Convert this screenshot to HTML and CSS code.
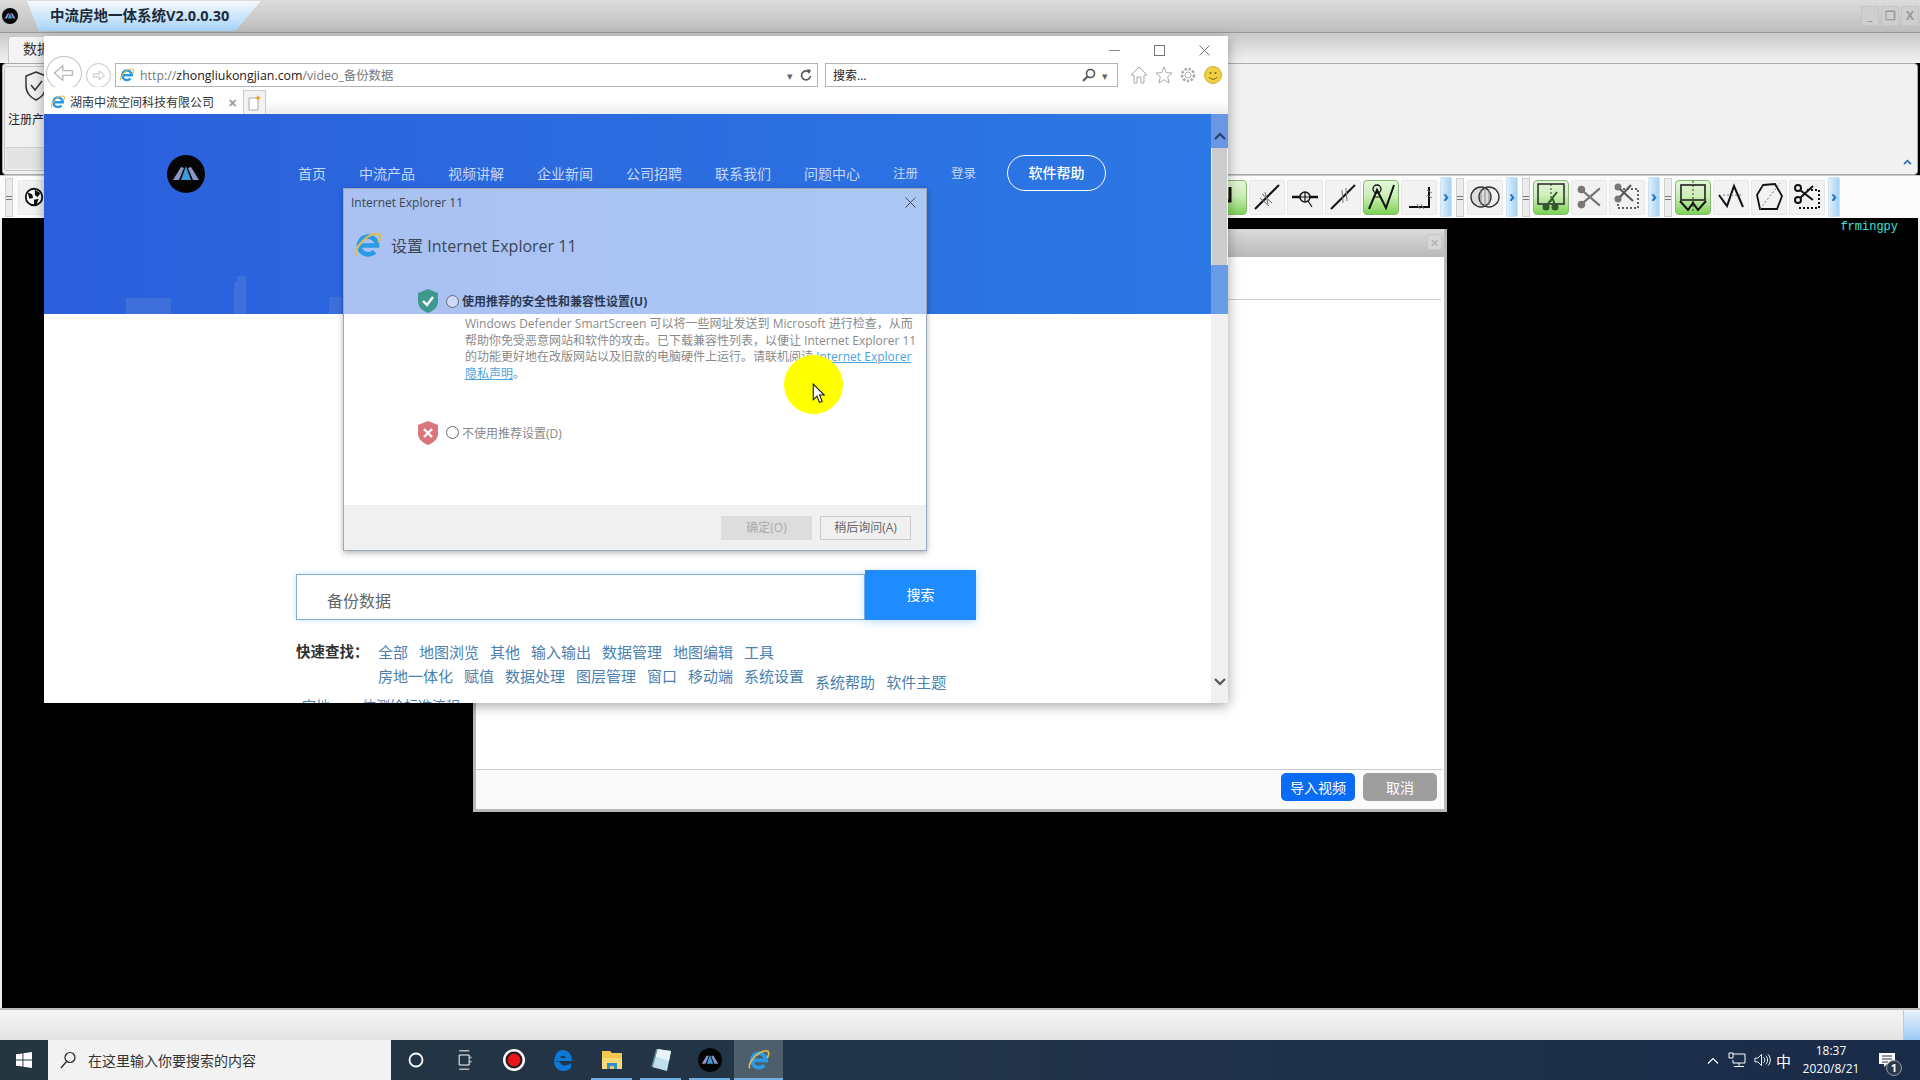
FILE: index.html
```html
<!DOCTYPE html>
<html lang="zh-CN">
<head>
  <meta charset="UTF-8">
  <title>中流房地一体系统</title>
  <link rel="stylesheet" href="styles.css">
</head>
<body>
  <svg class="defs" xmlns="http://www.w3.org/2000/svg">
    <symbol id="ie" viewBox="0 0 32 32">
      <path d="M6.5 16.5H25.5A9.5 9.5 0 1 0 23 23" fill="none" stroke="#2a9be8" stroke-width="5"/>
      <path d="M4 27C0 22 12 6 24 4c6-1 6 4 3 9" fill="none" stroke="#e3bd4c" stroke-width="2.2"/>
    </symbol>
    <symbol id="zl-logo" viewBox="0 0 38 38">
      <ellipse cx="19" cy="19" rx="19" ry="19" fill="#050505"/>
      <path d="M6 25L14 12l3 1-5 12z" fill="#8d97c9"/>
      <path d="M32 25L24 12l-3 1 5 12z" fill="#8d97c9"/>
      <path d="M14 25l5-14 5 14z" fill="#3f9ad8"/>
    </symbol>
    <symbol id="scissors" viewBox="0 0 24 24">
      <circle cx="5" cy="5" r="3.5" fill="currentColor"/>
      <circle cx="5" cy="19" r="3.5" fill="currentColor"/>
      <path d="M7 7l15 13M7 17L22 4" fill="none" stroke="currentColor" stroke-width="2"/>
    </symbol>
  </svg>

  <div class="app-title">
    <svg class="app-logo"><use href="#zl-logo"/></svg>
    <div class="app-title-tab">中流房地一体系统V2.0.0.30</div>
    <div class="app-controls">
      <span class="app-control">_</span>
      <span class="app-control">&#10064;</span>
      <span class="app-control">X</span>
    </div>
  </div>

  <div class="app-tabs">
    <div class="app-tab">数据</div>
  </div>

  <div class="ribbon">
    <div class="ribbon-group">
      <svg class="ribbon-shield" viewBox="0 0 24 32">
        <path d="M12 2L22 6V16C22 23 17 28 12 30C7 28 2 23 2 16V6Z" fill="none" stroke="#333" stroke-width="1.5"/>
        <path d="M7 15l4 5 7-9" fill="none" stroke="#333" stroke-width="1.5"/>
      </svg>
      <div class="ribbon-label">注册产品</div>
      <div class="ribbon-strip"></div>
    </div>
    <svg class="ribbon-collapse" viewBox="0 0 10 8"><path d="M1 7l4-4 4 4" fill="none" stroke="#2a70b8" stroke-width="2"/></svg>
  </div>

  <div class="toolbar">
    <span class="grip first-grip"></span>
    <div class="tool">
      <svg viewBox="0 0 24 24">
        <circle cx="12" cy="12" r="9" fill="#fff" stroke="#111" stroke-width="2"/>
        <path d="M5 7l5 2 1 4-4 1zM13 4l6 4-3 4-3-2zM12 15l5-1-2 6-3 1z" fill="#111"/>
      </svg>
    </div>
    <div class="tools-right">
      <div class="tool green">
        <svg viewBox="0 0 36 34"><path d="M19 7V21H13" fill="none" stroke="#111" stroke-width="3"/></svg>
      </div>
      <div class="tool">
        <svg viewBox="0 0 36 34">
          <path d="M6 29L30 5" stroke="#111" stroke-width="2"/>
          <path d="M13 14l10 9M11 18l9 8M16 12l3 12" stroke="#666" stroke-width="1"/>
        </svg>
      </div>
      <div class="tool">
        <svg viewBox="0 0 36 34">
          <path d="M5 17H31" stroke="#111" stroke-width="2.5"/>
          <circle cx="18" cy="17" r="5" fill="#eee" stroke="#111" stroke-width="1.5"/>
          <path d="M18 12v10M13 17h10M21 21l4 6" stroke="#111" stroke-width="1.2"/>
        </svg>
      </div>
      <div class="tool">
        <svg viewBox="0 0 36 34">
          <path d="M6 29L30 5" stroke="#111" stroke-width="2"/>
          <path d="M17 10l1 13M21 8l1 13" stroke="#777" stroke-width="1"/>
        </svg>
      </div>
      <div class="tool green">
        <svg viewBox="0 0 36 34">
          <path d="M6 29L14 10L23 28L31 5" fill="none" stroke="#111" stroke-width="2"/>
          <circle cx="14" cy="9" r="4" fill="none" stroke="#111" stroke-width="1.3"/>
          <path d="M11 17h7" stroke="#111" stroke-width="1"/>
        </svg>
      </div>
      <div class="tool">
        <svg viewBox="0 0 36 34">
          <path d="M8 27H28V7" fill="none" stroke="#111" stroke-width="2"/>
          <path d="M26 10l5 3M26 15l5 3M16 24l3 5M20 24l3 5" stroke="#777" stroke-width="1"/>
        </svg>
      </div>
      <div class="more">&#8250;</div>
      <span class="grip"></span>
      <div class="tool">
        <svg viewBox="0 0 36 34">
          <circle cx="14" cy="17" r="10" fill="#ddd" stroke="#333" stroke-width="1.4"/>
          <circle cx="22" cy="17" r="10" fill="none" stroke="#333" stroke-width="1.4"/>
          <path d="M14 9v16M18 8v18M22 9v16" stroke="#888" stroke-width="1"/>
        </svg>
      </div>
      <div class="more">&#8250;</div>
      <span class="grip"></span>
      <div class="tool green">
        <svg viewBox="0 0 36 34">
          <rect x="5" y="4" width="26" height="20" fill="none" stroke="#333" stroke-width="1.6"/>
          <path d="M18 4V24" stroke="#333" stroke-width="1" stroke-dasharray="2 2"/>
          <circle cx="13" cy="27" r="3.5" fill="#2f5a2f"/>
          <circle cx="22" cy="27" r="3.5" fill="#2f5a2f"/>
          <path d="M14 25L24 12M22 25L19 17" stroke="#2f5a2f" stroke-width="2"/>
        </svg>
      </div>
      <div class="tool">
        <svg class="tool-scissors grey" viewBox="0 0 24 24"><use href="#scissors"/></svg>
      </div>
      <div class="tool">
        <svg viewBox="0 0 36 34">
          <path d="M14 9H29V28H9V16" fill="none" stroke="#333" stroke-width="1.5" stroke-dasharray="2 2"/>
          <circle cx="9" cy="7" r="3.5" fill="#777"/>
          <circle cx="9" cy="19" r="3.5" fill="#777"/>
          <path d="M11 9L24 21M11 17L22 5" stroke="#555" stroke-width="2"/>
        </svg>
      </div>
      <div class="more">&#8250;</div>
      <span class="grip"></span>
      <div class="tool green">
        <svg viewBox="0 0 36 34">
          <rect x="6" y="5" width="24" height="15" fill="none" stroke="#222" stroke-width="1.6"/>
          <path d="M18 1V32" stroke="#333" stroke-width="1" stroke-dasharray="2 2"/>
          <path d="M5 21L13 30L18 23L23 30L31 21" fill="none" stroke="#111" stroke-width="2"/>
        </svg>
      </div>
      <div class="tool">
        <svg viewBox="0 0 36 34">
          <path d="M6 15L14 26L21 6L30 27" fill="none" stroke="#111" stroke-width="2"/>
          <path d="M10 15H28" stroke="#777" stroke-width="1" stroke-dasharray="2 2"/>
        </svg>
      </div>
      <div class="tool">
        <svg viewBox="0 0 36 34">
          <path d="M12 5L24 4L31 16L26 29H9L6 15Z" fill="none" stroke="#111" stroke-width="1.8"/>
          <path d="M9 29L29 3" stroke="#777" stroke-width="1" stroke-dasharray="2 2"/>
        </svg>
      </div>
      <div class="tool">
        <svg viewBox="0 0 36 34">
          <path d="M18 10H30V28H9" fill="none" stroke="#111" stroke-width="2" stroke-dasharray="2 2"/>
          <circle cx="9" cy="8" r="3" fill="none" stroke="#111" stroke-width="2"/>
          <circle cx="9" cy="20" r="3" fill="none" stroke="#111" stroke-width="2"/>
          <path d="M11 10L24 20M11 18L24 6" stroke="#111" stroke-width="2"/>
        </svg>
      </div>
      <div class="more">&#8250;</div>
    </div>
  </div>

  <div class="canvas">
    <span class="canvas-tag">frmingpy</span>
  </div>

  <div class="statusbar">
    <div class="status-corner"></div>
  </div>

  <div class="taskbar">
    <div class="start">
      <svg viewBox="0 0 16 16"><path d="M0 2.3L6.5 1.4V7.6H0ZM7.4 1.3L16 0V7.6H7.4ZM0 8.4H6.5V14.6L0 13.7ZM7.4 8.4H16V16L7.4 14.7Z" fill="#fff"/></svg>
    </div>
    <div class="task-search">
      <svg viewBox="0 0 16 18"><circle cx="10" cy="6.5" r="5" fill="none" stroke="#222" stroke-width="1.2"/><path d="M6.5 10.5L1 17" stroke="#222" stroke-width="1.2"/></svg>
      <span>在这里输入你要搜索的内容</span>
    </div>
    <div class="task-icons">
      <div class="task-icon">
        <svg viewBox="0 0 16 16"><circle cx="8" cy="8" r="6.5" fill="none" stroke="#fff" stroke-width="1.8"/></svg>
      </div>
      <div class="task-icon">
        <svg viewBox="0 0 16 24"><path d="M1 1H13M1 23H13M1 6H13V18H1ZM15 8V10M15 13V15" fill="none" stroke="#fff" stroke-width="1.2"/></svg>
      </div>
      <div class="task-icon">
        <svg class="big" viewBox="0 0 24 24"><circle cx="12" cy="12" r="11" fill="#fff"/><circle cx="12" cy="12" r="8.5" fill="#1b1b1b"/><circle cx="12" cy="12" r="6.5" fill="#e8141c"/></svg>
      </div>
      <div class="task-icon">
        <svg class="big" viewBox="0 0 24 24"><path d="M3 13H21C21 5 16 2 11 2C7 2 4 6 3 13ZM9 10C10 7 14 7 15 10ZM3 13C3 19 7 23 12 23C15 23 18 22 20 20V15C17 18 10 19 9 14Z" fill="#0d78d8" fill-rule="evenodd"/></svg>
      </div>
      <div class="task-icon running">
        <svg class="big" viewBox="0 0 24 24"><path d="M2 3H10L12 5H22V21H2Z" fill="#f4c84e"/><rect x="2" y="10" width="20" height="11" fill="#fbd975"/><rect x="7" y="15" width="10" height="6" fill="#2d8fd5"/><rect x="10" y="18" width="4" height="3" fill="#f4c84e"/></svg>
      </div>
      <div class="task-icon running">
        <svg class="big" viewBox="0 0 24 24"><path d="M8 1L22 3L18 23L3 19Z" fill="#bfe0ea"/><path d="M8 1L22 3L20 13L6 8Z" fill="#e8f5f8"/><path d="M3 19L8 1" stroke="#6a8d9b" stroke-width="1.5"/></svg>
      </div>
      <div class="task-icon running">
        <svg class="big"><use href="#zl-logo"/></svg>
      </div>
      <div class="task-icon active">
        <svg class="big" viewBox="0 0 32 32"><use href="#ie"/></svg>
      </div>
    </div>
    <div class="tray">
      <svg class="tray-chevron" viewBox="0 0 12 7"><path d="M1 6.5L6 1.5L11 6.5" fill="none" stroke="#fff" stroke-width="1.2"/></svg>
      <svg class="tray-net" viewBox="0 0 18 16"><path d="M5 2H17V11H5V8M11 11V14M6 14.5H16M1 1H5V6H1Z" fill="none" stroke="#fff"/></svg>
      <svg class="tray-vol" viewBox="0 0 18 16"><path d="M1 6H4L8 2V14L4 10H1ZM10 5C12 7 12 9 10 11M12.5 3.5C15 6 15 10 12.5 12.5M15 2C18 5.5 18 10.5 15 14" fill="none" stroke="#fff"/></svg>
      <span class="tray-ime">中</span>
      <div class="clock">
        <span>18:37</span>
        <span>2020/8/21</span>
      </div>
      <div class="notify">
        <svg viewBox="0 0 16 14"><path d="M0 0H16V11H8L5 14V11H0Z" fill="#fff"/><path d="M3 3H13M3 6H13M3 9H9" stroke="#1b2c48"/></svg>
        <span class="notify-badge">1</span>
      </div>
    </div>
  </div>

  <!-- 后面的导入视频窗口 -->
  <div class="import-dialog">
    <div class="import-head"><span class="import-close">&#10005;</span></div>
    <div class="import-field"></div>
    <div class="import-body"></div>
    <div class="import-foot">
      <button class="btn-primary">导入视频</button>
      <button class="btn-grey">取消</button>
    </div>
  </div>

  <!-- IE 窗口 -->
  <div class="ie-window">
    <div class="ie-titlebar">
      <svg class="win-btn" viewBox="0 0 11 11"><path d="M0 5.5H11" stroke="#888"/></svg>
      <svg class="win-btn" viewBox="0 0 11 11"><rect x=".5" y=".5" width="10" height="10" fill="none" stroke="#777"/></svg>
      <svg class="win-btn" viewBox="0 0 11 11"><path d="M.5 .5L10.5 10.5M10.5 .5L.5 10.5" stroke="#777"/></svg>
    </div>
    <div class="ie-address-row">
      <div class="nav-back">
        <svg viewBox="0 0 20 20"><path d="M17 8H9V4L2 10L9 16V12H17Z" fill="#fff" stroke="#bbb" stroke-width="1.2"/></svg>
      </div>
      <div class="nav-forward">
        <svg viewBox="0 0 20 20"><path d="M3 8H11V4L18 10L11 16V12H3Z" fill="#fff" stroke="#bbb" stroke-width="1.2"/></svg>
      </div>
      <div class="address-box">
        <svg class="small-ie" viewBox="0 0 32 32"><use href="#ie"/></svg>
        <span class="url"><span class="url-dim">http://</span>zhongliukongjian.com<span class="url-dim">/video_备份数据</span></span>
        <span class="drop">&#9662;</span>
        <svg class="refresh" viewBox="0 0 12 12"><path d="M9.5 3.5A4.5 4.5 0 1 0 10.5 7" fill="none" stroke="#555" stroke-width="1.6"/><path d="M7 0L11 1L9 5Z" fill="#555"/></svg>
      </div>
      <div class="search-box">
        <span class="search-text">搜索...</span>
        <svg class="lens" viewBox="0 0 14 14"><circle cx="8.5" cy="5.5" r="4" fill="none" stroke="#555" stroke-width="1.6"/><path d="M5.5 8.5L1 13" stroke="#555" stroke-width="2"/></svg>
        <span class="drop">&#9662;</span>
      </div>
      <div class="ie-tools">
        <svg viewBox="0 0 18 18"><path d="M9 1L17 9H14V17H11V11H7V17H4V9H1Z" fill="#fff" stroke="#aaa"/></svg>
        <svg viewBox="0 0 18 18"><path d="M9 1L11.3 6.6L17 7L12.7 10.8L14 17L9 13.7L4 17L5.3 10.8L1 7L6.7 6.6Z" fill="#fff" stroke="#aaa"/></svg>
        <svg viewBox="0 0 18 18"><circle cx="9" cy="9" r="6" fill="none" stroke="#aaa" stroke-width="2.5" stroke-dasharray="2.5 1.5"/><circle cx="9" cy="9" r="3" fill="#fff" stroke="#aaa"/></svg>
        <svg viewBox="0 0 18 18"><circle cx="9" cy="9" r="8.5" fill="#f0cf45" stroke="#cfae33"/><circle cx="6.5" cy="7" r="1" fill="#7a6417"/><circle cx="11.5" cy="7" r="1" fill="#7a6417"/><path d="M5 11C7 14 11 14 13 11" fill="none" stroke="#7a6417"/></svg>
      </div>
    </div>
    <div class="ie-tab-row">
      <div class="ie-tab">
        <svg class="small-ie" viewBox="0 0 32 32"><use href="#ie"/></svg>
        <span class="ie-tab-text">湖南中流空间科技有限公司</span>
        <span class="ie-tab-close">&#10005;</span>
      </div>
      <div class="ie-new-tab">
        <svg viewBox="0 0 14 16"><path d="M1 3H10V15H1Z" fill="#fff" stroke="#aaa"/><path d="M10 0l1 2 2 1-2 1-1 2-1-2-2-1 2-1z" fill="#f0a020"/></svg>
      </div>
    </div>

    <div class="ie-page">
      <div class="page-content">
        <section class="banner">
          <svg class="logo"><use href="#zl-logo"/></svg>
          <nav class="nav">
            <span>首页</span>
            <span>中流产品</span>
            <span>视频讲解</span>
            <span>企业新闻</span>
            <span>公司招聘</span>
            <span>联系我们</span>
            <span>问题中心</span>
            <span class="nav-small">注册</span>
            <span class="nav-small">登录</span>
          </nav>
          <div class="help-btn">软件帮助</div>
          <svg class="skyline" viewBox="0 0 300 54">
            <path d="M82 54V38H127V54ZM190 54V22H193V16H202V22H202V54ZM285 54V37H298V54Z" fill="#3f6fdb"/>
          </svg>
        </section>

        <div class="search-form">
          <div class="search-input">备份数据</div>
          <div class="search-btn">搜索</div>
        </div>

        <div class="quick">
          <div class="quick-label">快速查找：</div>
          <div class="quick-links">
            <div class="quick-row">
              <span>全部</span><span>地图浏览</span><span>其他</span><span>输入输出</span><span>数据管理</span><span>地图编辑</span><span>工具</span>
            </div>
            <div class="quick-row">
              <span>房地一体化</span><span>赋值</span><span>数据处理</span><span>图层管理</span><span>窗口</span><span>移动端</span><span>系统设置</span><span class="quick-low">系统帮助</span><span class="quick-low">软件主题</span>
            </div>
          </div>
        </div>
        <div class="quick-more"><span>宗地</span><span>一体测绘标准流程</span></div>
      </div>

      <div class="scrollbar">
        <div class="scroll-arrow">
          <svg viewBox="0 0 12 8"><path d="M1 7L6 2L11 7" fill="none" stroke="#24436f" stroke-width="2.2"/></svg>
        </div>
        <div class="scroll-thumb"></div>
        <div class="scroll-blue"></div>
        <div class="scroll-track"></div>
        <div class="scroll-arrow-down">
          <svg viewBox="0 0 12 8"><path d="M1 1L6 6L11 1" fill="none" stroke="#555" stroke-width="2.2"/></svg>
        </div>
      </div>
    </div>

    <!-- IE 11 设置对话框 -->
    <div class="setup-dialog">
      <div class="setup-title">
        <span>Internet Explorer 11</span>
        <svg class="setup-close" viewBox="0 0 11 11"><path d="M.5 .5L10.5 10.5M10.5 .5L.5 10.5" stroke="#444"/></svg>
      </div>
      <div class="setup-heading">
        <svg viewBox="0 0 32 32"><use href="#ie"/></svg>
        <span>设置 Internet Explorer 11</span>
      </div>
      <div class="setup-option first">
        <svg class="shield" viewBox="0 0 20 24">
          <path d="M10 0L20 4V13C20 18 15 22 10 24C5 22 0 18 0 13V4Z" fill="#3f9a8e"/>
          <path d="M5 12l4 4 6-8" fill="none" stroke="#fff" stroke-width="2.4"/>
        </svg>
        <span class="radio"></span>
        <span class="option-strong">使用推荐的安全性和兼容性设置(U)</span>
      </div>
      <p class="setup-desc">Windows Defender SmartScreen 可以将一些网址发送到 Microsoft 进行检查，从而<br>帮助你免受恶意网站和软件的攻击。已下载兼容性列表，以便让 Internet Explorer 11<br>的功能更好地在改版网站以及旧款的电脑硬件上运行。请联机阅读 <a class="setup-link">Internet Explorer</a><br><a class="setup-link">隐私声明</a>。</p>
      <div class="setup-option second">
        <svg class="shield" viewBox="0 0 20 24">
          <path d="M10 0L20 4V13C20 18 15 22 10 24C5 22 0 18 0 13V4Z" fill="#d9767c"/>
          <path d="M6 8l8 8M14 8l-8 8" fill="none" stroke="#fff" stroke-width="2.4"/>
        </svg>
        <span class="radio"></span>
        <span class="option-plain">不使用推荐设置(D)</span>
      </div>
      <div class="setup-foot">
        <div class="setup-btn disabled">确定(O)</div>
        <div class="setup-btn">稍后询问(A)</div>
      </div>
    </div>
  </div>

  <!-- 录屏时的鼠标高亮 -->
  <div class="cursor-spot">
    <svg viewBox="0 0 12 20"><path d="M1 1V16L4.5 12.5L7 18.5L9.5 17.5L7 11.5H11.5Z" fill="#fff" stroke="#111"/></svg>
  </div>
</body>
</html>
```

FILE: styles.css
```css
* {
  margin: 0;
  padding: 0;
  box-sizing: border-box;
  font-family: "Open Sans", "Noto Sans CJK SC", sans-serif;
}

body {
  width: 1920px;
  height: 1080px;
  position: relative;
  overflow: hidden;
  display: flex;
  flex-direction: column;
  background-color: #000;
}

.defs {
  position: absolute;
  width: 0;
  height: 0;
}

/* 主程序标题栏 */
.app-title {
  height: 33px;
  display: flex;
  align-items: center;
  background: linear-gradient(#dcdcdc, #bdbdbd);
  border-bottom: 1px solid #999;
  padding-left: 2px;
}

.app-logo {
  width: 16px;
  height: 16px;
}

.app-title-tab {
  width: 234px;
  height: 30px;
  margin-left: 9px;
  padding-left: 23px;
  line-height: 30px;
  font-size: 14.5px;
  font-weight: bold;
  color: #1c2a3a;
  background: linear-gradient(#f4f9fd, #a8d4f7);
  clip-path: polygon(0 0, 100% 0, 89% 100%, 5% 100%);
}

.app-controls {
  margin-left: auto;
  display: flex;
  gap: 2px;
  padding-right: 1px;
}

.app-control {
  width: 18px;
  height: 20px;
  line-height: 18px;
  text-align: center;
  font-size: 12px;
  font-weight: bold;
  color: #999;
  background-color: #cfcfcf;
  border: 1px solid #c4c4c4;
  border-radius: 2px;
}

/* 功能区 */
.app-tabs {
  height: 30px;
  padding: 3px 0 0 8px;
  background: linear-gradient(#c9c9c9, #f2f2f2);
}

.app-tab {
  width: 60px;
  height: 27px;
  padding-left: 14px;
  font-size: 14px;
  line-height: 24px;
  color: #333;
  background-color: #f4f4f4;
  border: 1px solid #c8c8c8;
  border-bottom: none;
  border-radius: 3px 3px 0 0;
}

.ribbon {
  height: 112px;
  position: relative;
  margin: 0 2px;
  background-color: #f1f1f1;
  border: 1px solid #ababab;
  border-radius: 4px;
}

.ribbon-group {
  width: 60px;
  height: 105px;
  margin: 2px 0 0 1px;
  border: 1px solid #c4c4c4;
  border-radius: 3px;
  display: flex;
  flex-direction: column;
  padding-left: 3px;
}

.ribbon-shield {
  width: 24px;
  height: 32px;
  margin: 3px 0 0 16px;
}

.ribbon-label {
  font-size: 12px;
  margin-top: 8px;
  color: #222;
  white-space: nowrap;
}

.ribbon-strip {
  height: 22px;
  margin: auto 0 1px -2px;
  background-color: #e4e4e4;
  border-top: 1px solid #cfcfcf;
}

.ribbon-collapse {
  position: absolute;
  right: 5px;
  bottom: 9px;
  width: 9px;
  height: 7px;
}

/* 工具栏 */
.toolbar {
  height: 43px;
  display: flex;
  align-items: center;
  background-color: #fcfcfc;
  border-top: 1px solid #c8c8c8;
  padding-left: 5px;
}

.tools-right {
  margin-left: auto;
  margin-right: 80px;
  display: flex;
  align-items: center;
  gap: 2px;
}

.tool {
  width: 36px;
  height: 35px;
  background-color: #f2f2f2;
  border: 1px solid #e8e8e8;
  border-radius: 2px;
  display: flex;
  align-items: center;
  justify-content: center;
}

.tool svg {
  width: 36px;
  height: 34px;
  flex: none;
}

.first-grip + .tool {
  margin-left: 5px;
}

.first-grip + .tool svg {
  width: 22px;
  height: 22px;
  margin-left: -4px;
}

.tool .tool-scissors {
  width: 26px;
  height: 26px;
}

.grey {
  color: #777;
}

.green {
  background: linear-gradient(#e4f6da, #cdeeb8 45%, #7ed356);
  border: 1px solid #83b86e;
  border-radius: 4px;
}

.more {
  width: 12px;
  height: 40px;
  margin-left: 1px;
  line-height: 36px;
  text-align: center;
  font-size: 16px;
  font-weight: bold;
  color: #1c6fc0;
  background: linear-gradient(90deg, #e0f0fc, #a6d2f6);
  border: 1px solid #cde3f5;
  border-radius: 2px;
}

.grip {
  width: 8px;
  height: 39px;
  margin: 0 1px 0 2px;
  background: linear-gradient(transparent 46%, #777 46%, #777 48%, transparent 48%, transparent 50%, #777 50%, #777 52%, transparent 52%, transparent 54%, #777 54%, #777 56%, transparent 56%), #ececec;
  border: 1px solid #d0d0d0;
}

.first-grip {
  margin: 0;
}

/* 黑色地图区 */
.canvas {
  flex: 1;
  background-color: #000;
  border-left: 2px solid #eee;
  border-right: 2px solid #eee;
  display: flex;
  justify-content: flex-end;
  padding: 0 20px 0 0;
}

.canvas-tag {
  font-family: "Liberation Mono", monospace;
  font-size: 12px;
  line-height: 18px;
  color: #3fe0dc;
}

.statusbar {
  height: 32px;
  background: linear-gradient(#f4f4f4, #e4e4e4);
  border-top: 2px solid #bbb;
  display: flex;
  justify-content: flex-end;
}

.status-corner {
  width: 17px;
  background: linear-gradient(#e8f2fb, #9ccbf3);
  border-left: 1px solid #bcd;
}

/* 任务栏 */
.taskbar {
  height: 40px;
  display: flex;
  align-items: center;
  background: linear-gradient(90deg, #24363f, #22344a 50%, #1a2b49);
}

.start {
  width: 48px;
  display: flex;
  justify-content: center;
}

.start svg {
  width: 16px;
  height: 16px;
}

.task-search {
  width: 343px;
  height: 40px;
  background-color: #f2f2f2;
  display: flex;
  align-items: center;
  gap: 12px;
  padding-left: 12px;
  font-size: 14px;
  color: #333;
}

.task-search svg {
  width: 16px;
  height: 18px;
}

.task-icons {
  display: flex;
}

.task-icon {
  width: 49px;
  height: 40px;
  display: flex;
  align-items: center;
  justify-content: center;
  position: relative;
}

.task-icon svg {
  width: 16px;
  height: 20px;
}

.task-icon .big {
  width: 24px;
  height: 24px;
}

.running::after,
.active::after {
  content: "";
  position: absolute;
  left: 4px;
  right: 4px;
  bottom: 0;
  height: 2px;
  background-color: #6fb0e4;
}

.active {
  background-color: #4d5f6b;
}

.active::after {
  left: 0;
  right: 0;
}

.tray {
  margin-left: auto;
  display: flex;
  align-items: center;
  color: #fff;
  padding-right: 25px;
}

.tray-chevron {
  width: 12px;
  height: 7px;
}

.tray-net {
  width: 18px;
  height: 16px;
  margin-left: 9px;
}

.tray-vol {
  width: 17px;
  height: 16px;
  margin-left: 8px;
}

.tray-ime {
  margin-left: 5px;
  font-size: 15px;
}

.clock {
  display: flex;
  flex-direction: column;
  align-items: center;
  margin-left: 11px;
  font-size: 12px;
  line-height: 18px;
  width: 58px;
}

.notify {
  position: relative;
  margin-left: 19px;
  width: 16px;
  height: 14px;
}

.notify svg {
  width: 16px;
  height: 14px;
  display: block;
}

.notify-badge {
  position: absolute;
  left: 7px;
  top: 7px;
  width: 16px;
  height: 16px;
  border-radius: 50%;
  line-height: 13px;
  text-align: center;
  font-size: 11px;
  font-weight: bold;
  background-color: #2c3a50;
  border: 1px solid #999;
}

/* 导入视频窗口 */
.import-dialog {
  position: absolute;
  left: 473px;
  top: 229px;
  width: 974px;
  height: 583px;
  background-color: #fff;
  border: 3px solid #b9b9b9;
  border-top: none;
  display: flex;
  flex-direction: column;
}

.import-head {
  height: 28px;
  background: linear-gradient(#dadada, #b9b9b9);
  display: flex;
  justify-content: flex-end;
  padding: 5px 2px 0 0;
}

.import-close {
  width: 15px;
  height: 16px;
  line-height: 15px;
  text-align: center;
  font-size: 11px;
  color: #aaa;
  background-color: #d6d6d6;
  border: 1px solid #c6c6c6;
  border-radius: 2px;
}

.import-field {
  height: 43px;
  border-bottom: 1px solid #ccc;
  margin-right: 3px;
}

.import-body {
  flex: 1;
}

.import-foot {
  height: 40px;
  background-color: #fafafa;
  border-top: 1px solid #ccc;
  border-right: 3px solid #fff;
  display: flex;
  gap: 8px;
  justify-content: flex-end;
  padding: 3px 4px 0 0;
}

.btn-primary,
.btn-grey {
  width: 74px;
  height: 28px;
  border: none;
  border-radius: 5px;
  font-size: 14px;
  color: #fff;
}

.btn-primary {
  background-color: #0a6cf5;
}

.btn-grey {
  background-color: #9e9e9e;
}

/* IE 窗口 */
.ie-window {
  position: absolute;
  left: 44px;
  top: 36px;
  width: 1184px;
  height: 667px;
  background-color: #fff;
  box-shadow: 0 3px 12px rgba(0, 0, 0, 0.35);
  display: flex;
  flex-direction: column;
}

.ie-titlebar {
  height: 27px;
  display: flex;
  justify-content: flex-end;
  align-items: center;
  gap: 34px;
  padding: 2px 18px 0 0;
}

.win-btn {
  width: 11px;
  height: 11px;
}

.ie-address-row {
  height: 24px;
  display: flex;
  align-items: center;
  padding-left: 2px;
}

.nav-back,
.nav-forward {
  flex: none;
  border-radius: 50%;
  border: 1px solid #c4c4c4;
  display: flex;
  align-items: center;
  justify-content: center;
}

.nav-back {
  width: 36px;
  height: 34px;
  margin: -7px 0 -3px;
}

.nav-back svg {
  width: 24px;
  height: 24px;
}

.nav-forward {
  width: 25px;
  height: 25px;
  margin-left: 4px;
}

.nav-forward svg {
  width: 15px;
  height: 15px;
}

.address-box {
  width: 703px;
  height: 24px;
  margin-left: 4px;
  border: 1px solid #b4b4b4;
  display: flex;
  align-items: center;
  padding-left: 3px;
}

.small-ie {
  width: 16px;
  height: 16px;
  flex: none;
}

.url {
  margin-left: 5px;
  font-size: 12.4px;
  color: #222;
}

.url-dim {
  color: #777;
}

.drop {
  margin-left: auto;
  font-size: 11px;
  color: #666;
}

.refresh {
  width: 12px;
  height: 12px;
  margin: 0 5px 0 7px;
}

.search-box {
  width: 293px;
  height: 24px;
  margin-left: 7px;
  border: 1px solid #b4b4b4;
  display: flex;
  align-items: center;
  padding: 0 9px 0 7px;
}

.search-text {
  font-size: 12px;
  color: #222;
}

.lens {
  width: 14px;
  height: 14px;
  margin-left: auto;
}

.search-box .drop {
  margin-left: 6px;
}

.ie-tools {
  display: flex;
  gap: 6.5px;
  margin-left: 12px;
}

.ie-tools svg {
  width: 18px;
  height: 18px;
}

.ie-tab-row {
  height: 27px;
  padding-top: 3px;
  display: flex;
  background-image: linear-gradient(#fff 50%, #ececec);
}

.ie-tab {
  width: 199px;
  display: flex;
  align-items: center;
  background-color: #fff;
  padding-left: 6px;
}

.ie-tab-text {
  margin-left: 4px;
  font-size: 12px;
  color: #333;
}

.ie-tab-close {
  margin-left: 14px;
  font-size: 11px;
  font-weight: bold;
  color: #999;
}

.ie-new-tab {
  width: 23px;
  background-color: #f2f2f2;
  border: 1px solid #ccc;
  border-bottom: none;
  display: flex;
  align-items: center;
  justify-content: center;
}

.ie-new-tab svg {
  width: 14px;
  height: 16px;
}

.ie-page {
  flex: 1;
  display: flex;
  min-height: 0;
}

.page-content {
  flex: 1;
  overflow: hidden;
}

.banner {
  height: 200px;
  position: relative;
  display: flex;
  align-items: flex-start;
  padding: 41px 0 0 123px;
  background: linear-gradient(90deg, #2b5fdc, #2c78e4);
}

.logo {
  width: 38px;
  height: 38px;
  flex: none;
}

.nav {
  display: flex;
  gap: 33px;
  margin-left: 93px;
  font-size: 14px;
  line-height: 37px;
  color: #c6d8f6;
}

.nav-small {
  font-size: 12.5px;
}

.help-btn {
  width: 99px;
  height: 36px;
  margin-left: 31px;
  border: 1px solid #fff;
  border-radius: 18px;
  line-height: 34px;
  text-align: center;
  font-size: 14px;
  font-weight: 500;
  color: #fff;
}

.skyline {
  position: absolute;
  left: 0;
  bottom: 0;
  width: 300px;
  height: 54px;
}

.search-form {
  display: flex;
  align-items: flex-end;
  margin: 256px 0 0 252px;
}

.search-input {
  width: 569px;
  height: 46px;
  border: 1px solid #7ab0de;
  padding-left: 30px;
  font-size: 16px;
  line-height: 52px;
  color: #666;
  box-shadow: 0 0 5px rgba(122, 176, 222, 0.4);
}

.search-btn {
  width: 111px;
  height: 50px;
  line-height: 50px;
  text-align: center;
  font-size: 14px;
  color: #fff;
  background-color: #1e8cff;
  box-shadow: 0 2px 8px rgba(30, 140, 255, 0.3);
}

.quick {
  display: flex;
  margin: 20px 0 0 252px;
}

.quick-label {
  width: 82px;
  font-size: 14.5px;
  font-weight: bold;
  line-height: 24px;
  color: #333;
}

.quick-row {
  display: flex;
  align-items: flex-start;
  gap: 11px;
  font-size: 15px;
  line-height: 24px;
  color: #4a7fb0;
}

.quick-low {
  margin-top: 6px;
}

.quick-more {
  display: flex;
  gap: 18px;
  margin-left: 258px;
  font-size: 14px;
  line-height: 24px;
  color: #4a7fb0;
}

/* 滚动条 */
.scrollbar {
  width: 17px;
  display: flex;
  flex-direction: column;
  background-color: #f0f0f0;
}

.scroll-arrow {
  height: 34px;
  padding-top: 9px;
  background-color: #6a97e4;
  display: flex;
  align-items: center;
  justify-content: center;
}

.scroll-arrow svg,
.scroll-arrow-down svg {
  width: 12px;
  height: 8px;
}

.scroll-thumb {
  height: 117px;
  margin: 0 1px;
  background-color: #cccccc;
}

.scroll-blue {
  height: 49px;
  background-color: #6a9be6;
}

.scroll-track {
  flex: 1;
}

.scroll-arrow-down {
  height: 20px;
  margin-bottom: 11px;
  display: flex;
  align-items: center;
  justify-content: center;
}

/* 设置对话框 */
.setup-dialog {
  position: absolute;
  left: 299px;
  top: 152px;
  width: 584px;
  height: 363px;
  background-color: rgba(255, 255, 255, 0.6);
  border: 1px solid #9aa8c0;
  box-shadow: 0 2px 6px rgba(0, 0, 0, 0.3);
  display: flex;
  flex-direction: column;
}

.setup-title {
  height: 26px;
  display: flex;
  align-items: center;
  justify-content: space-between;
  padding: 0 10px 0 7px;
  font-size: 12px;
  color: #3a4656;
}

.setup-close {
  width: 11px;
  height: 11px;
}

.setup-heading {
  height: 30px;
  margin-top: 15px;
  display: flex;
  align-items: center;
  padding-left: 9px;
  gap: 8px;
  font-size: 16px;
  color: #3a4656;
}

.setup-heading svg {
  width: 30px;
  height: 30px;
}

.setup-option {
  display: flex;
  align-items: center;
  height: 24px;
  padding-left: 74px;
  font-size: 12px;
}

.setup-option.first {
  margin-top: 29px;
}

.setup-option.second {
  margin-top: 38px;
}

.shield {
  width: 20px;
  height: 24px;
  flex: none;
}

.radio {
  width: 13px;
  height: 13px;
  margin: 0 3px 0 8px;
  flex: none;
  border: 1px solid #667;
  border-radius: 50%;
  background-color: rgba(255, 255, 255, 0.4);
}

.option-strong {
  font-weight: bold;
  color: #2a3a55;
}

.option-plain {
  color: #888;
}

.setup-desc {
  margin: 3px 0 0 121px;
  font-size: 12px;
  line-height: 16.7px;
  color: #8a8a8a;
  white-space: nowrap;
}

.setup-link {
  color: #4f9fd9;
  text-decoration: underline;
}

.setup-foot {
  margin-top: auto;
  height: 45px;
  background-color: #f0f0f0;
  display: flex;
  justify-content: flex-end;
  gap: 8px;
  padding: 11px 15px 0 0;
}

.setup-btn {
  width: 91px;
  height: 24px;
  line-height: 22px;
  text-align: center;
  font-size: 12px;
  color: #666;
  background-color: #f0f0f0;
  border: 1px solid #ccc;
}

.setup-btn.disabled {
  color: #aaa;
  background-color: #ddd;
  border-color: #ddd;
}

/* 鼠标高亮 */
.cursor-spot {
  position: absolute;
  left: 784px;
  top: 355px;
  width: 59px;
  height: 59px;
  border-radius: 50%;
  background-color: #ffff00;
}

.cursor-spot svg {
  position: absolute;
  left: 28px;
  top: 28px;
  width: 13px;
  height: 21px;
}
```
